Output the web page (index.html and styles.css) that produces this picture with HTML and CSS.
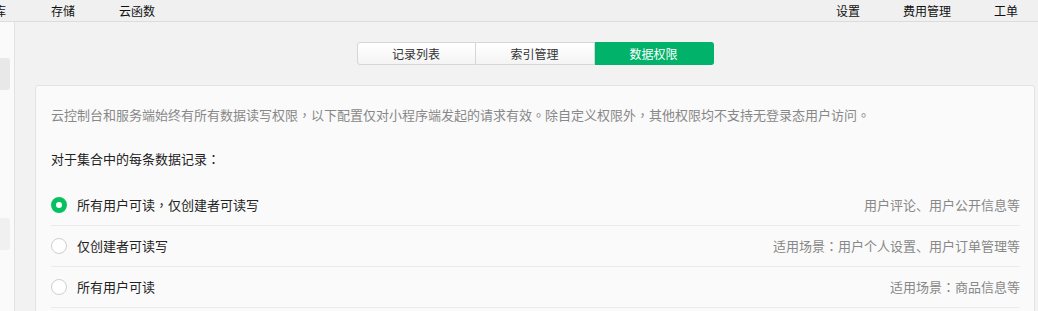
FILE: index.html
```html
<!DOCTYPE html>
<html lang="zh">
<head>
<meta charset="utf-8">
<link rel="stylesheet" href="styles.css">
</head>
<body>
<header class="topbar">
  <nav class="nav-left">
    <span class="nav-item cut">库</span>
    <span class="nav-item">存储</span>
    <span class="nav-item">云函数</span>
  </nav>
  <nav class="nav-right">
    <span class="nav-item">设置</span>
    <span class="nav-item">费用管理</span>
    <span class="nav-item">工单</span>
  </nav>
</header>
<div class="layout">
  <aside class="sidebar">
    <div class="side-block side-block-a"></div>
    <div class="side-block side-block-b"></div>
  </aside>
  <main class="main">
    <div class="tabs">
      <div class="tab">记录列表</div>
      <div class="tab">索引管理</div>
      <div class="tab active">数据权限</div>
    </div>
    <section class="card">
      <p class="desc">云控制台和服务端始终有所有数据读写权限<span class="punct" lang="zh-Hant">，</span>以下配置仅对小程序端发起的请求有效<span class="punct" lang="zh-Hant">。</span>除自定义权限外<span class="punct" lang="zh-Hant">，</span>其他权限均不支持无登录态用户访问<span class="punct" lang="zh-Hant">。</span></p>
      <p class="lead">对于集合中的每条数据记录<span class="punct" lang="zh-Hant">：</span></p>
      <ul class="options">
        <li class="option">
          <span class="radio checked"></span>
          <span class="label">所有用户可读<span class="punct" lang="zh-Hant">，</span>仅创建者可读写</span>
          <span class="hint">用户评论、用户公开信息等</span>
        </li>
        <li class="option">
          <span class="radio"></span>
          <span class="label">仅创建者可读写</span>
          <span class="hint">适用场景<span class="punct" lang="zh-Hant">：</span>用户个人设置、用户订单管理等</span>
        </li>
        <li class="option">
          <span class="radio"></span>
          <span class="label">所有用户可读</span>
          <span class="hint">适用场景<span class="punct" lang="zh-Hant">：</span>商品信息等</span>
        </li>
      </ul>
    </section>
  </main>
</div>
</body>
</html>
```
FILE: styles.css
```css
* { box-sizing: border-box; }
html, body {
  margin: 0;
  padding: 0;
  height: 100%;
  overflow: hidden;
  background: #f2f2f2;
  font-family: "Noto Sans CJK SC", "Noto Sans", sans-serif;
  color: #333;
}
.punct {
  font-family: "Noto Sans CJK TC", "Noto Sans CJK SC", sans-serif;
}
.topbar {
  height: 22px;
  background: #f0f0f0;
  border-bottom: 1px solid #dcdcdc;
  display: flex;
  justify-content: space-between;
  align-items: center;
  font-size: 12px;
  color: #111;
}
.nav-left, .nav-right {
  display: flex;
  align-items: center;
  line-height: 20px;
}
.nav-left { margin-left: -6px; gap: 45px; }
.nav-left .nav-item:nth-child(3) { margin-left: -1px; }
.nav-right { gap: 43px; margin-right: 20px; }
.layout {
  display: flex;
  height: calc(100% - 22px);
}
.sidebar {
  width: 15px;
  flex: none;
  background: #fafafa;
  border-right: 1px solid #e2e2e2;
  padding-top: 36px;
}
.side-block {
  width: 10px;
  height: 32px;
  border-radius: 0 3px 3px 0;
}
.side-block-a { background: #e8e8e8; }
.side-block-b { background: #f0f0f0; margin-top: 128px; }
.main {
  flex: 1;
  padding: 20px 3px 0 20px;
}
.tabs {
  display: flex;
  justify-content: center;
}
.tab {
  width: 119px;
  height: 23px;
  line-height: 21px;
  text-align: center;
  font-size: 12px;
  color: #333;
  background: linear-gradient(#ffffff, #f4f4f4);
  border: 1px solid #d6d6d6;
  border-left: none;
}
.tab:first-child {
  border-left: 1px solid #d6d6d6;
  border-radius: 3px 0 0 3px;
}
.tab.active {
  background: #00b26a;
  border-color: #00b26a;
  color: #fff;
  border-radius: 0 3px 3px 0;
}
.card {
  margin-top: 20px;
  background: #fafafa;
  border: 1px solid #e3e3e3;
  border-radius: 3px;
  padding: 0 14px 0 15px;
  height: 240px;
}
.desc {
  margin: 19px 0 0;
  font-size: 13px;
  line-height: 20px;
  color: #888;
}
.lead {
  margin: 24px 0 0;
  font-size: 13px;
  line-height: 20px;
  color: #222;
}
.options {
  list-style: none;
  margin: 16px 0 0;
  padding: 0;
}
.option {
  display: flex;
  align-items: center;
  height: 41px;
  padding-bottom: 1px;
  border-bottom: 1px solid #ebebeb;
  font-size: 13px;
}
.radio {
  width: 16px;
  height: 16px;
  border-radius: 50%;
  border: 1px solid #cfcfcf;
  background: #fff;
  flex: none;
  margin-right: 10px;
}
.radio.checked {
  background: #07c160;
  border: 5px solid #07c160;
}
.radio.checked::after {
  content: "";
  display: block;
  width: 6px;
  height: 6px;
  border-radius: 50%;
  background: #fff;
}
.label {
  color: #222;
  flex: 1;
}
.hint {
  color: #888;
}
```
